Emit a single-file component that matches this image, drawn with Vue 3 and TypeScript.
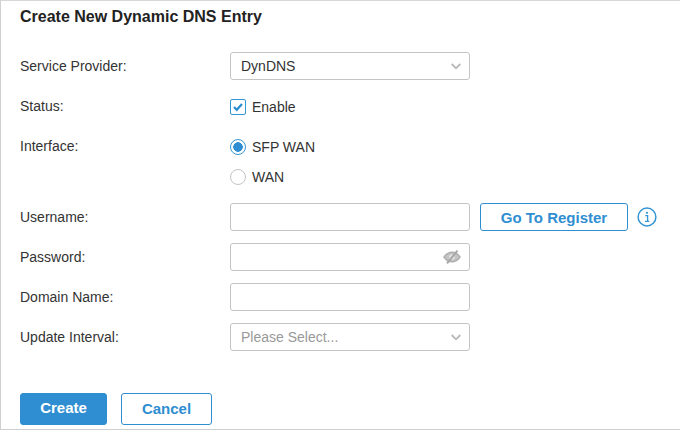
<script setup lang="ts">
const textRows = ['Username:', 'Password:', 'Domain Name:', 'Update Interval:']
</script>

<template>
  <main class="page">
    <h1 class="title">Create New Dynamic DNS Entry</h1>
    <form class="form" @submit.prevent>
      <div class="row first">
        <label class="label">Service Provider:</label>
        <div class="field select">
          <span>DynDNS</span>
          <svg class="chev" width="10" height="7" viewBox="0 0 10 7"><path d="M.7 1l4.300 4.300L9.300 1" fill="none" stroke="#b8b8b8" stroke-width="1.800"/></svg>
        </div>
      </div>
      <div class="row status">
        <label class="label raised">Status:</label>
        <div class="opt">
          <span class="check">
            <svg width="12" height="10" viewBox="0 0 12 10"><path d="M2 5l2.800 2.800L10 2" fill="none" stroke="#2f8ed1" stroke-width="2.200"/></svg>
          </span>
          <span>Enable</span>
        </div>
      </div>
      <div class="row iface">
        <label class="label">Interface:</label>
        <div class="radios">
          <div class="opt"><span class="radio on"></span><span>SFP WAN</span></div>
          <div class="opt"><span class="radio"></span><span>WAN</span></div>
        </div>
      </div>
      <div class="row">
        <label class="label">{{ textRows[0] }}</label>
        <div class="field"></div>
        <button type="button" class="btn reg">Go To Register</button>
        <svg class="info" width="20" height="20" viewBox="0 0 20 20">
          <circle cx="10" cy="10" r="8.900" fill="none" stroke="#3596d6" stroke-width="1.500"/>
          <circle cx="10" cy="5.800" r="1.100" fill="#3596d6"/>
          <path d="M8.300 8.600h2.300v5.500M8 14.400h4.300" fill="none" stroke="#3596d6" stroke-width="1.300"/>
        </svg>
      </div>
      <div class="row">
        <label class="label">{{ textRows[1] }}</label>
        <div class="field pw">
          <svg width="18" height="14" viewBox="0 0 18 14">
            <path d="M1 7c2-3 4.800-4.800 8-4.800S15 4 17 7c-2 3-4.800 4.800-8 4.800S3 10 1 7z" fill="#c4c4c4" stroke="#b0b0b0" stroke-width="1.400"/>
            <circle cx="9" cy="7" r="2.800" fill="#e4e4e4"/>
            <path d="M14.500 .6L4 13.400" stroke="#a8a8a8" stroke-width="2"/>
          </svg>
        </div>
      </div>
      <div class="row">
        <label class="label">{{ textRows[2] }}</label>
        <div class="field"></div>
      </div>
      <div class="row">
        <label class="label">{{ textRows[3] }}</label>
        <div class="field select placeholder">
          <span>Please Select...</span>
          <svg class="chev" width="10" height="7" viewBox="0 0 10 7"><path d="M.7 1l4.300 4.300L9.300 1" fill="none" stroke="#b8b8b8" stroke-width="1.800"/></svg>
        </div>
      </div>
      <div class="actions">
        <button type="button" class="btn primary">Create</button>
        <button type="button" class="btn cancel">Cancel</button>
      </div>
    </form>
  </main>
</template>

<style scoped>
.page {
  box-sizing: border-box;
  width: 680px;
  height: 430px;
  overflow: hidden;
  background: #fff;
  border-top: 1px solid #d8d8d8;
  border-left: 1px solid #d0d0d0;
  border-bottom: 1px solid #cfcfcf;
  padding: 0 0 0 19px;
  font-family: "Liberation Sans", Arial, sans-serif;
  font-size: 14px;
  color: #333;
}
.title {
  margin: 0;
  padding-top: 6px;
  height: 45px;
  box-sizing: border-box;
  font-size: 16px;
  line-height: 20px;
  font-weight: 700;
  color: #222;
}
.form { display: flex; flex-direction: column; }
.row { display: flex; align-items: center; height: 28px; margin-bottom: 12px; }
.first { margin-top: 6px; }
.label { width: 210px; flex: none; }
.raised { margin-top: -3px; }
.status { height: 24px; margin-top: 3px; margin-bottom: 0; }
.iface { height: auto; align-items: flex-start; margin-top: 20px; margin-bottom: 18px; }
.iface .label { line-height: 14px; }
.radios { display: flex; flex-direction: column; gap: 14px; }
.opt { display: flex; align-items: center; height: 16px; gap: 6px; }
.field {
  box-sizing: border-box;
  width: 240px;
  height: 28px;
  border: 1px solid #c4c4c4;
  border-radius: 3px;
  display: flex;
  align-items: center;
  justify-content: space-between;
  padding: 0 8px 0 10px;
  flex: none;
}
.placeholder { color: #999; }
.pw { justify-content: flex-end; padding-right: 8px; }
.chev { margin-top: 1px; }
.check {
  box-sizing: border-box;
  width: 16px;
  height: 16px;
  border: 1.500px solid #3596d6;
  border-radius: 2px;
  display: flex;
  align-items: center;
  justify-content: center;
}
.radio {
  box-sizing: border-box;
  width: 16px;
  height: 16px;
  border: 1px solid #c4c4c4;
  border-radius: 50%;
  display: block;
  flex: none;
}
.radio.on {
  border-color: #3596d6;
  background: radial-gradient(circle, #2f8ed1 0 4.500px, #fff 5px);
}
.btn {
  box-sizing: border-box;
  font-family: inherit;
  font-size: 15px;
  font-weight: 700;
  border-radius: 3px;
  border: 1px solid #2f8ed1;
  background: #fff;
  color: #2f8ed1;
  padding: 0;
}
.reg { width: 148px; height: 28px; margin-left: 10px; }
.info { margin-left: 9px; flex: none; }
.actions { display: flex; gap: 14px; margin-top: 30px; }
.primary { width: 87px; height: 32px; padding-bottom: 3px; background: #2f8ed1; color: #fff; }
.cancel { width: 91px; height: 32px; padding-bottom: 1px; }
</style>
